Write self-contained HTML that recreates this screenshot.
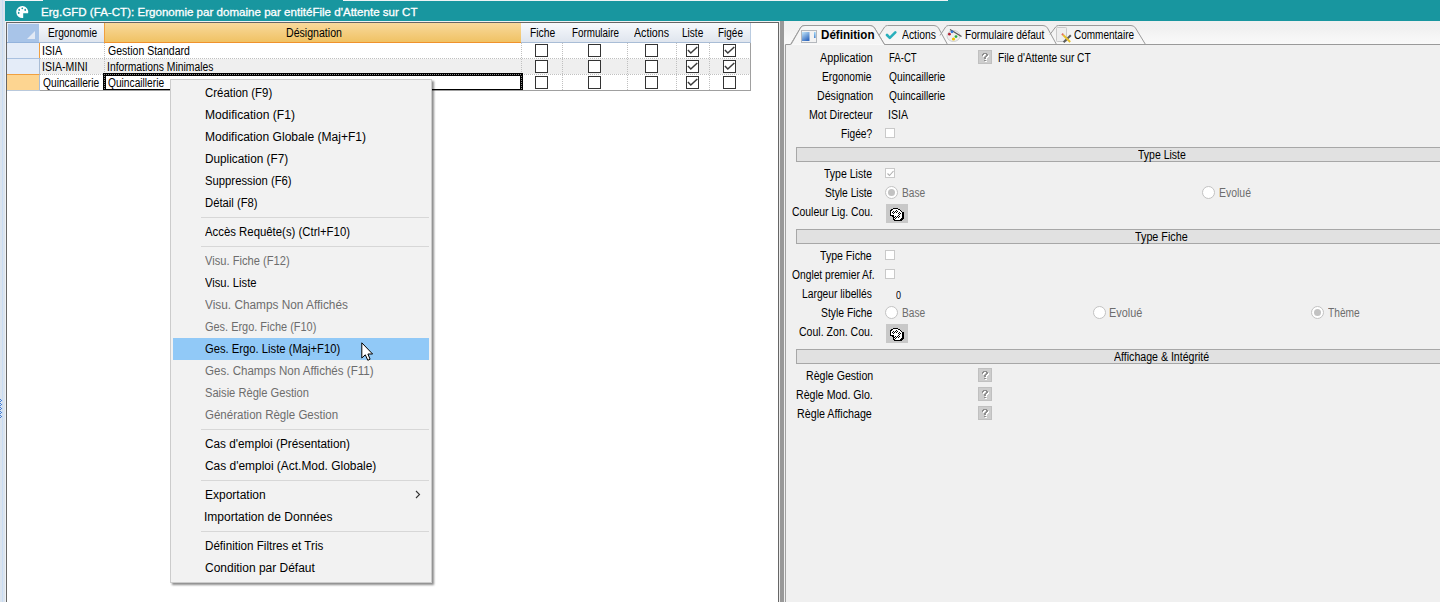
<!DOCTYPE html>
<html><head><meta charset="utf-8">
<style>
*{margin:0;padding:0;box-sizing:border-box}
html,body{width:1440px;height:602px;overflow:hidden;background:#fff;font-family:"Liberation Sans",sans-serif;font-size:11px;color:#000;letter-spacing:-0.3px}
.a{position:absolute}
.t{position:absolute;white-space:nowrap;line-height:13px}
.hd{position:absolute;top:23px;height:20px;background:linear-gradient(#f7f9fc,#dfe5ee);border-bottom:1px solid #a9bdd6;border-right:1px solid #b9cbe0;text-align:center;line-height:18px}
.cb{position:absolute;width:13px;height:13px;border:1px solid #333;background:#fff}
.vd{position:absolute;width:1px;border-left:1px dotted #c0c0c0}
.hdot{position:absolute;height:1px;border-top:1px dotted #c0c0c0}
.mi{position:absolute;left:205px;letter-spacing:0;white-space:nowrap;font-size:12px;line-height:22px;height:22px}
.dis{color:#6d6d6d}
.sep{position:absolute;left:201px;width:228px;height:1px;background:#d7d7d7}
.lab{position:absolute;right:568px;white-space:nowrap;line-height:13px;text-align:right}
.val{position:absolute;left:888px;white-space:nowrap;line-height:13px}
.fcb{position:absolute;left:885px;width:10px;height:10px;border:1px solid #c9c9c9;background:#fff}
.band{position:absolute;left:796px;width:700px;height:15px;background:#e1e1e1;border:1px solid #a7a7a7;border-right:none}
.bandt{position:absolute;left:796px;width:732px;text-align:center;line-height:13px;margin-top:-1px;letter-spacing:-0.2px}
.rad{position:absolute;width:13px;height:13px;border:1px solid #c2c2c2;border-radius:50%;background:#fff}
.rad.on::after{content:"";position:absolute;left:2px;top:2px;width:7px;height:7px;border-radius:50%;background:#c2c2c2}
.qb{position:absolute;left:978px;width:14px;height:14px;background:#c9c9c9;color:#f4f4f4;font-weight:bold;font-size:11px;text-align:center;line-height:14px}
.pb{position:absolute;left:886px;width:22px;height:19px;background:#c8c8c8}
</style></head><body>

<!-- left strip -->
<div class="a" style="left:0;top:0;width:6px;height:602px;background:#dbe4ee"></div>
<div class="a" style="left:2px;top:0;width:1px;height:602px;background:#c9dcf3"></div>
<div class="a" style="left:5px;top:0;width:1px;height:602px;background:#eef2f6"></div>

<!-- title bar -->
<div class="a" style="left:5px;top:0;width:1435px;height:21px;background:#18969f"></div>
<div class="a" style="left:5px;top:0;width:38px;height:1px;background:#f4f6f8"></div>
<div class="a" style="left:5px;top:21px;width:1435px;height:1px;background:#f2f2f2"></div>
<div class="a" style="left:343px;top:0;width:605px;height:1px;background:#eef3f5"></div>
<svg class="a" style="left:0;top:399px" width="3" height="19" shape-rendering="crispEdges" fill="#3f7bd8"><rect x="0" y="0" width="1" height="1"/><rect x="1" y="1" width="1" height="1"/><rect x="0" y="2" width="1" height="1"/><rect x="0" y="4" width="1" height="1"/><rect x="1" y="5" width="1" height="1"/><rect x="0" y="6" width="1" height="1"/><rect x="0" y="8" width="1" height="1"/><rect x="1" y="9" width="1" height="1"/><rect x="0" y="10" width="1" height="1"/><rect x="0" y="12" width="1" height="1"/><rect x="1" y="13" width="1" height="1"/><rect x="0" y="14" width="1" height="1"/><rect x="0" y="16" width="1" height="1"/><rect x="1" y="17" width="1" height="1"/><rect x="0" y="18" width="1" height="1"/></svg>

<svg class="a" style="left:12px;top:3px" width="20" height="18" viewBox="0 0 20 18"><path fill="#fff" d="M11.2 10.3H16.12A6 6 0 1 0 11.2 14.97Z"/><ellipse cx="7.2" cy="6.9" rx="0.85" ry="1.05" fill="#18969f"/><ellipse cx="10.3" cy="5.4" rx="0.9" ry="0.8" fill="#18969f"/><ellipse cx="13.2" cy="6.9" rx="0.85" ry="1.05" fill="#18969f"/><ellipse cx="6.7" cy="9.9" rx="0.8" ry="1.05" fill="#18969f"/></svg>


<!-- left pane -->
<div class="a" style="left:6px;top:22px;width:773px;height:600px;border:1px solid #666;border-bottom:none"></div>
<div class="a" style="left:779px;top:21px;width:1px;height:581px;background:#ececec"></div>
<div class="a" style="left:780px;top:21px;width:4px;height:581px;background:#999"></div>
<div class="a" style="left:784px;top:21px;width:656px;height:581px;background:#f0f0f0"></div>

<!-- grid header -->
<div class="a" style="left:7px;top:23px;width:33px;height:20px;background:#a8c4e8;border-bottom:1px solid #93b3dc;border-right:1px solid #9bb6d8"></div>
<div class="a" style="left:27px;top:31px;width:0;height:0;border-left:8px solid transparent;border-bottom:8px solid #e3eaf5"></div><div class="a" style="left:7px;top:23px;width:32px;height:1px;background:#e4ecf8"></div><div class="a" style="left:7px;top:23px;width:1px;height:19px;background:#e4ecf8"></div>
<div class="hd" style="left:39px;width:66px"></div>
<div class="hd" style="left:104px;width:418px;background:linear-gradient(#f8d99c,#f0c264);border-left:1px solid #f0a040;border-bottom:1px solid #f0922c;border-right:1px solid #b9cbe0"></div>
<div class="hd" style="left:521px;width:42px"></div>
<div class="hd" style="left:562px;width:66px"></div>
<div class="hd" style="left:627px;width:50px"></div>
<div class="hd" style="left:676px;width:34px"></div>
<div class="hd" style="left:709px;width:42px"></div>

<!-- rows -->
<div class="a" style="left:7px;top:43px;width:33px;height:16px;background:#e4ecf8;border-bottom:1px solid #a9c1e0;border-right:1px solid #a9bdd6"></div>
<div class="a" style="left:7px;top:59px;width:33px;height:16px;background:#e4ecf8;border-bottom:1px solid #f0a040;border-right:1px solid #a9bdd6"></div>
<div class="a" style="left:7px;top:75px;width:33px;height:16px;background:#fdd591;border-bottom:1px solid #b9c9dc;border-right:1px solid #a9bdd6"></div>
<div class="a" style="left:39px;top:43px;width:1px;height:15px;background:#f0a040"></div>
<div class="a" style="left:40px;top:59px;width:711px;height:15px;background:#efefef"></div>
<div class="hdot" style="left:40px;top:58px;width:711px"></div>
<div class="hdot" style="left:40px;top:74px;width:711px"></div>
<div class="a" style="left:40px;top:90px;width:711px;height:1px;background:#a0a0a0"></div>
<div class="vd" style="left:104px;top:43px;height:47px"></div>
<div class="vd" style="left:521px;top:43px;height:47px"></div>
<div class="vd" style="left:562px;top:43px;height:47px"></div>
<div class="vd" style="left:627px;top:43px;height:47px"></div>
<div class="vd" style="left:676px;top:43px;height:47px"></div>
<div class="vd" style="left:709px;top:43px;height:47px"></div>
<div class="a" style="left:750px;top:43px;width:1px;height:48px;background:#a0a0a0"></div>






<div class="a" style="left:103px;top:73px;width:420px;height:17px;border:3px solid #000;border-bottom-width:1px"></div>
<div class="a" style="left:104px;top:74px;width:418px;height:1px;background:repeating-linear-gradient(90deg,#8a8a8a 0 1px,#000 1px 2px)"></div><div class="a" style="left:104px;top:75px;width:1px;height:14px;background:repeating-linear-gradient(180deg,#000 0 1px,#8a8a8a 1px 2px)"></div><div class="a" style="left:521px;top:75px;width:1px;height:14px;background:repeating-linear-gradient(180deg,#000 0 1px,#8a8a8a 1px 2px)"></div>

<div class="cb" style="left:535px;top:44px"></div>
<div class="cb" style="left:535px;top:60px"></div>
<div class="cb" style="left:535px;top:76px"></div>
<div class="cb" style="left:588px;top:44px"></div>
<div class="cb" style="left:588px;top:60px"></div>
<div class="cb" style="left:588px;top:76px"></div>
<div class="cb" style="left:645px;top:44px"></div>
<div class="cb" style="left:645px;top:60px"></div>
<div class="cb" style="left:645px;top:76px"></div>
<div class="cb" style="left:686px;top:44px"><svg width="11" height="11" style="position:absolute;left:0;top:0"><path d="M0.9 5L3.8 8L10.3 2" fill="none" stroke="#3a3a3a" stroke-width="1.5"/></svg></div>
<div class="cb" style="left:686px;top:60px"><svg width="11" height="11" style="position:absolute;left:0;top:0"><path d="M0.9 5L3.8 8L10.3 2" fill="none" stroke="#3a3a3a" stroke-width="1.5"/></svg></div>
<div class="cb" style="left:686px;top:76px"><svg width="11" height="11" style="position:absolute;left:0;top:0"><path d="M0.9 5L3.8 8L10.3 2" fill="none" stroke="#3a3a3a" stroke-width="1.5"/></svg></div>
<div class="cb" style="left:723px;top:44px"><svg width="11" height="11" style="position:absolute;left:0;top:0"><path d="M0.9 5L3.8 8L10.3 2" fill="none" stroke="#3a3a3a" stroke-width="1.5"/></svg></div>
<div class="cb" style="left:723px;top:60px"><svg width="11" height="11" style="position:absolute;left:0;top:0"><path d="M0.9 5L3.8 8L10.3 2" fill="none" stroke="#3a3a3a" stroke-width="1.5"/></svg></div>
<div class="cb" style="left:723px;top:76px"></div>

<!-- right panel -->
<div class="a" style="left:785px;top:44px;width:655px;height:558px;border-left:1px solid #a0a0a0;background:#f0f0f0"></div>
<!-- tabs -->
<div class="a" style="left:784px;top:22px;width:656px;height:23px;background:linear-gradient(#f0f0f0 0%,#f1f1f1 30%,#fafafa 100%)"></div>
<svg class="a" style="left:784px;top:22px" width="656" height="24" viewBox="784 22 656 24">
<path d="M785.5 45.5V44.5H790.5L801 27Q802.5 25.5 805 25.5H870Q873 25.5 874.5 28L884.5 44.5H1440" fill="none" stroke="#9a9a9a" stroke-width="1"/>
<path d="M791 44L801 27Q802.5 25.5 805 25.5H870Q873 25.5 874.5 28L884 44Z" fill="#f6f6f6"/>
<path d="M791 44.5L801 27Q802.5 25.5 805 25.5H870Q873 25.5 874.5 28L884.5 44.5" fill="none" stroke="#9a9a9a"/>
<path d="M879 35.5L884.6 27Q885.6 25.5 887.5 25.5H934Q937 25.5 938.5 28L947.5 44.5" fill="none" stroke="#9a9a9a"/>
<path d="M940 35.5L945.6 27Q946.6 25.5 948.5 25.5H1043Q1046 25.5 1047.5 28L1056.5 44.5" fill="none" stroke="#9a9a9a"/>
<path d="M1050 34.5L1055.6 27Q1056.6 25.5 1058.5 25.5H1131Q1134 25.5 1135.5 28L1145.5 44.5" fill="none" stroke="#9a9a9a"/>
</svg>

<svg class="a" style="left:801px;top:30px" width="16" height="13" viewBox="0 0 16 13"><defs><linearGradient id="gb" x1="0" y1="0" x2="0.6" y2="1"><stop offset="0" stop-color="#c4e8fb"/><stop offset="1" stop-color="#356cc0"/></linearGradient><linearGradient id="gb2" x1="0" y1="0" x2="0" y2="1"><stop offset="0" stop-color="#9dd4f6"/><stop offset="1" stop-color="#4a86d0"/></linearGradient></defs>
<rect x="0.5" y="0.5" width="15" height="12" fill="#f2f2f2" stroke="#b4b8bd"/><rect x="1" y="2" width="7.5" height="9" fill="url(#gb)"/><rect x="13" y="2" width="1.6" height="6" fill="url(#gb2)"/></svg>
<svg class="a" style="left:885px;top:30px" width="12" height="10" viewBox="0 0 12 10"><path d="M2 5L4.8 7.8L10.3 2.3" fill="none" stroke="#29afbc" stroke-width="2.6" stroke-linecap="round" stroke-linejoin="round"/></svg>
<svg class="a" style="left:946px;top:28px" width="17" height="15" viewBox="0 0 17 15"><ellipse cx="7.5" cy="8" rx="6.5" ry="5.5" fill="#efefef" stroke="#c8c8c8" stroke-width="0.8"/><path d="M4 1.5L15.5 8.5" stroke="#555" stroke-width="1.2"/><circle cx="6" cy="3.8" r="1.4" fill="#3578d8"/><circle cx="3.4" cy="6.2" r="1.4" fill="#b22030"/><circle cx="10" cy="8.6" r="1.4" fill="#28b040"/><circle cx="7.5" cy="11" r="1.6" fill="#f0c000"/></svg>
<svg class="a" style="left:1055px;top:26px" width="17" height="17" viewBox="0 0 17 17"><rect x="1.5" y="1.5" width="10" height="14" rx="0.8" fill="#eeeeee" stroke="#c9c9c9"/><path d="M15.8 9.2L8.6 16.2" stroke="#5a5a5a" stroke-width="2"/><path d="M8.2 9L15.2 16" stroke="#e6bf2e" stroke-width="2"/><path d="M7 7.8L8.2 9" stroke="#e07060" stroke-width="2"/></svg>

























<div class="qb" style="top:50px"><svg style="position:absolute;left:0;top:0" width="14" height="14" shape-rendering="crispEdges"><rect x="0.5" y="0.5" width="13" height="13" fill="#cdcdcd" stroke="#c0c0c0"/><rect x="6" y="4" width="1" height="1" fill="#fff"/><rect x="7" y="4" width="1" height="1" fill="#fff"/><rect x="8" y="4" width="1" height="1" fill="#fff"/><rect x="9" y="4" width="1" height="1" fill="#fff"/><rect x="5" y="5" width="1" height="1" fill="#fff"/><rect x="6" y="5" width="1" height="1" fill="#fff"/><rect x="9" y="5" width="1" height="1" fill="#fff"/><rect x="10" y="5" width="1" height="1" fill="#fff"/><rect x="5" y="6" width="1" height="1" fill="#fff"/><rect x="9" y="6" width="1" height="1" fill="#fff"/><rect x="10" y="6" width="1" height="1" fill="#fff"/><rect x="8" y="7" width="1" height="1" fill="#fff"/><rect x="9" y="7" width="1" height="1" fill="#fff"/><rect x="7" y="8" width="1" height="1" fill="#fff"/><rect x="8" y="8" width="1" height="1" fill="#fff"/><rect x="7" y="9" width="1" height="1" fill="#fff"/><rect x="8" y="9" width="1" height="1" fill="#fff"/><rect x="7" y="11" width="1" height="1" fill="#fff"/><rect x="8" y="11" width="1" height="1" fill="#fff"/><rect x="5" y="3" width="1" height="1" fill="#8e8e8e"/><rect x="6" y="3" width="1" height="1" fill="#8e8e8e"/><rect x="7" y="3" width="1" height="1" fill="#8e8e8e"/><rect x="8" y="3" width="1" height="1" fill="#8e8e8e"/><rect x="4" y="4" width="1" height="1" fill="#8e8e8e"/><rect x="5" y="4" width="1" height="1" fill="#8e8e8e"/><rect x="8" y="4" width="1" height="1" fill="#8e8e8e"/><rect x="9" y="4" width="1" height="1" fill="#8e8e8e"/><rect x="4" y="5" width="1" height="1" fill="#8e8e8e"/><rect x="8" y="5" width="1" height="1" fill="#8e8e8e"/><rect x="9" y="5" width="1" height="1" fill="#8e8e8e"/><rect x="7" y="6" width="1" height="1" fill="#8e8e8e"/><rect x="8" y="6" width="1" height="1" fill="#8e8e8e"/><rect x="6" y="7" width="1" height="1" fill="#8e8e8e"/><rect x="7" y="7" width="1" height="1" fill="#8e8e8e"/><rect x="6" y="8" width="1" height="1" fill="#8e8e8e"/><rect x="7" y="8" width="1" height="1" fill="#8e8e8e"/><rect x="6" y="10" width="1" height="1" fill="#8e8e8e"/><rect x="7" y="10" width="1" height="1" fill="#8e8e8e"/></svg></div>

<div class="fcb" style="top:128px"></div>
<div class="band" style="top:147px"></div>
<div class="fcb" style="top:168px"><svg width="9" height="9" style="position:absolute;left:0;top:0"><path d="M1.5 4.5L3.5 6.5L7.5 2" fill="none" stroke="#b0b0b0" stroke-width="1.1"/></svg></div>
<div class="rad on" style="left:885px;top:186px"></div>
<div class="rad" style="left:1202px;top:186px"></div>
<div class="pb" style="top:204px"><svg style="position:absolute;left:0;top:0" width="22" height="19" shape-rendering="crispEdges"><rect x="7" y="4" width="5" height="1" fill="#000"/><rect x="5" y="5" width="2" height="1" fill="#000"/><rect x="7" y="5" width="5" height="1" fill="#fff"/><rect x="12" y="5" width="2" height="1" fill="#000"/><rect x="4" y="6" width="2" height="1" fill="#000"/><rect x="6" y="6" width="8" height="1" fill="#fff"/><rect x="14" y="6" width="1" height="1" fill="#000"/><rect x="4" y="7" width="1" height="1" fill="#000"/><rect x="5" y="7" width="10" height="1" fill="#fff"/><rect x="15" y="7" width="1" height="1" fill="#000"/><rect x="4" y="8" width="1" height="1" fill="#000"/><rect x="5" y="8" width="11" height="1" fill="#fff"/><rect x="16" y="8" width="2" height="1" fill="#000"/><rect x="4" y="9" width="1" height="1" fill="#000"/><rect x="5" y="9" width="11" height="1" fill="#fff"/><rect x="16" y="9" width="2" height="1" fill="#000"/><rect x="4" y="10" width="1" height="1" fill="#000"/><rect x="5" y="10" width="11" height="1" fill="#fff"/><rect x="16" y="10" width="2" height="1" fill="#000"/><rect x="4" y="11" width="4" height="1" fill="#000"/><rect x="8" y="11" width="8" height="1" fill="#fff"/><rect x="16" y="11" width="2" height="1" fill="#000"/><rect x="6" y="12" width="2" height="1" fill="#000"/><rect x="8" y="12" width="8" height="1" fill="#fff"/><rect x="16" y="12" width="2" height="1" fill="#000"/><rect x="7" y="13" width="1" height="1" fill="#000"/><rect x="8" y="13" width="8" height="1" fill="#fff"/><rect x="16" y="13" width="2" height="1" fill="#000"/><rect x="7" y="14" width="1" height="1" fill="#000"/><rect x="8" y="14" width="7" height="1" fill="#fff"/><rect x="15" y="14" width="3" height="1" fill="#000"/><rect x="7" y="15" width="2" height="1" fill="#000"/><rect x="9" y="15" width="5" height="1" fill="#fff"/><rect x="14" y="15" width="3" height="1" fill="#000"/><rect x="8" y="16" width="8" height="1" fill="#000"/><rect x="7" y="7" width="1" height="1" fill="#000"/><rect x="6" y="8" width="1" height="1" fill="#000"/><rect x="8" y="8" width="1" height="1" fill="#000"/><rect x="7" y="9" width="1" height="1" fill="#000"/><rect x="10" y="6" width="1" height="1" fill="#000"/><rect x="9" y="7" width="1" height="1" fill="#000"/><rect x="11" y="7" width="1" height="1" fill="#000"/><rect x="10" y="8" width="1" height="1" fill="#000"/><rect x="13" y="8" width="1" height="1" fill="#000"/><rect x="12" y="9" width="1" height="1" fill="#000"/><rect x="14" y="9" width="1" height="1" fill="#000"/><rect x="13" y="10" width="1" height="1" fill="#000"/><rect x="12" y="11" width="1" height="1" fill="#000"/><rect x="11" y="12" width="1" height="1" fill="#000"/><rect x="13" y="12" width="1" height="1" fill="#000"/><rect x="12" y="13" width="1" height="1" fill="#000"/><rect x="9" y="12" width="1" height="1" fill="#000"/><rect x="8" y="13" width="1" height="1" fill="#000"/><rect x="10" y="13" width="1" height="1" fill="#000"/><rect x="9" y="14" width="1" height="1" fill="#000"/></svg></div>
<div class="band" style="top:229px"></div>
<div class="fcb" style="top:250px"></div>
<div class="fcb" style="top:269px"></div>

<div class="rad" style="left:885px;top:306px"></div>
<div class="rad" style="left:1093px;top:306px"></div>
<div class="rad on" style="left:1311px;top:306px"></div>
<div class="pb" style="top:324px"><svg style="position:absolute;left:0;top:0" width="22" height="19" shape-rendering="crispEdges"><rect x="7" y="4" width="5" height="1" fill="#000"/><rect x="5" y="5" width="2" height="1" fill="#000"/><rect x="7" y="5" width="5" height="1" fill="#fff"/><rect x="12" y="5" width="2" height="1" fill="#000"/><rect x="4" y="6" width="2" height="1" fill="#000"/><rect x="6" y="6" width="8" height="1" fill="#fff"/><rect x="14" y="6" width="1" height="1" fill="#000"/><rect x="4" y="7" width="1" height="1" fill="#000"/><rect x="5" y="7" width="10" height="1" fill="#fff"/><rect x="15" y="7" width="1" height="1" fill="#000"/><rect x="4" y="8" width="1" height="1" fill="#000"/><rect x="5" y="8" width="11" height="1" fill="#fff"/><rect x="16" y="8" width="2" height="1" fill="#000"/><rect x="4" y="9" width="1" height="1" fill="#000"/><rect x="5" y="9" width="11" height="1" fill="#fff"/><rect x="16" y="9" width="2" height="1" fill="#000"/><rect x="4" y="10" width="1" height="1" fill="#000"/><rect x="5" y="10" width="11" height="1" fill="#fff"/><rect x="16" y="10" width="2" height="1" fill="#000"/><rect x="4" y="11" width="4" height="1" fill="#000"/><rect x="8" y="11" width="8" height="1" fill="#fff"/><rect x="16" y="11" width="2" height="1" fill="#000"/><rect x="6" y="12" width="2" height="1" fill="#000"/><rect x="8" y="12" width="8" height="1" fill="#fff"/><rect x="16" y="12" width="2" height="1" fill="#000"/><rect x="7" y="13" width="1" height="1" fill="#000"/><rect x="8" y="13" width="8" height="1" fill="#fff"/><rect x="16" y="13" width="2" height="1" fill="#000"/><rect x="7" y="14" width="1" height="1" fill="#000"/><rect x="8" y="14" width="7" height="1" fill="#fff"/><rect x="15" y="14" width="3" height="1" fill="#000"/><rect x="7" y="15" width="2" height="1" fill="#000"/><rect x="9" y="15" width="5" height="1" fill="#fff"/><rect x="14" y="15" width="3" height="1" fill="#000"/><rect x="8" y="16" width="8" height="1" fill="#000"/><rect x="7" y="7" width="1" height="1" fill="#000"/><rect x="6" y="8" width="1" height="1" fill="#000"/><rect x="8" y="8" width="1" height="1" fill="#000"/><rect x="7" y="9" width="1" height="1" fill="#000"/><rect x="10" y="6" width="1" height="1" fill="#000"/><rect x="9" y="7" width="1" height="1" fill="#000"/><rect x="11" y="7" width="1" height="1" fill="#000"/><rect x="10" y="8" width="1" height="1" fill="#000"/><rect x="13" y="8" width="1" height="1" fill="#000"/><rect x="12" y="9" width="1" height="1" fill="#000"/><rect x="14" y="9" width="1" height="1" fill="#000"/><rect x="13" y="10" width="1" height="1" fill="#000"/><rect x="12" y="11" width="1" height="1" fill="#000"/><rect x="11" y="12" width="1" height="1" fill="#000"/><rect x="13" y="12" width="1" height="1" fill="#000"/><rect x="12" y="13" width="1" height="1" fill="#000"/><rect x="9" y="12" width="1" height="1" fill="#000"/><rect x="8" y="13" width="1" height="1" fill="#000"/><rect x="10" y="13" width="1" height="1" fill="#000"/><rect x="9" y="14" width="1" height="1" fill="#000"/></svg></div>
<div class="band" style="top:349px"></div>
<div class="qb" style="top:368px"><svg style="position:absolute;left:0;top:0" width="14" height="14" shape-rendering="crispEdges"><rect x="0.5" y="0.5" width="13" height="13" fill="#cdcdcd" stroke="#c0c0c0"/><rect x="6" y="4" width="1" height="1" fill="#fff"/><rect x="7" y="4" width="1" height="1" fill="#fff"/><rect x="8" y="4" width="1" height="1" fill="#fff"/><rect x="9" y="4" width="1" height="1" fill="#fff"/><rect x="5" y="5" width="1" height="1" fill="#fff"/><rect x="6" y="5" width="1" height="1" fill="#fff"/><rect x="9" y="5" width="1" height="1" fill="#fff"/><rect x="10" y="5" width="1" height="1" fill="#fff"/><rect x="5" y="6" width="1" height="1" fill="#fff"/><rect x="9" y="6" width="1" height="1" fill="#fff"/><rect x="10" y="6" width="1" height="1" fill="#fff"/><rect x="8" y="7" width="1" height="1" fill="#fff"/><rect x="9" y="7" width="1" height="1" fill="#fff"/><rect x="7" y="8" width="1" height="1" fill="#fff"/><rect x="8" y="8" width="1" height="1" fill="#fff"/><rect x="7" y="9" width="1" height="1" fill="#fff"/><rect x="8" y="9" width="1" height="1" fill="#fff"/><rect x="7" y="11" width="1" height="1" fill="#fff"/><rect x="8" y="11" width="1" height="1" fill="#fff"/><rect x="5" y="3" width="1" height="1" fill="#8e8e8e"/><rect x="6" y="3" width="1" height="1" fill="#8e8e8e"/><rect x="7" y="3" width="1" height="1" fill="#8e8e8e"/><rect x="8" y="3" width="1" height="1" fill="#8e8e8e"/><rect x="4" y="4" width="1" height="1" fill="#8e8e8e"/><rect x="5" y="4" width="1" height="1" fill="#8e8e8e"/><rect x="8" y="4" width="1" height="1" fill="#8e8e8e"/><rect x="9" y="4" width="1" height="1" fill="#8e8e8e"/><rect x="4" y="5" width="1" height="1" fill="#8e8e8e"/><rect x="8" y="5" width="1" height="1" fill="#8e8e8e"/><rect x="9" y="5" width="1" height="1" fill="#8e8e8e"/><rect x="7" y="6" width="1" height="1" fill="#8e8e8e"/><rect x="8" y="6" width="1" height="1" fill="#8e8e8e"/><rect x="6" y="7" width="1" height="1" fill="#8e8e8e"/><rect x="7" y="7" width="1" height="1" fill="#8e8e8e"/><rect x="6" y="8" width="1" height="1" fill="#8e8e8e"/><rect x="7" y="8" width="1" height="1" fill="#8e8e8e"/><rect x="6" y="10" width="1" height="1" fill="#8e8e8e"/><rect x="7" y="10" width="1" height="1" fill="#8e8e8e"/></svg></div><div class="qb" style="top:387px"><svg style="position:absolute;left:0;top:0" width="14" height="14" shape-rendering="crispEdges"><rect x="0.5" y="0.5" width="13" height="13" fill="#cdcdcd" stroke="#c0c0c0"/><rect x="6" y="4" width="1" height="1" fill="#fff"/><rect x="7" y="4" width="1" height="1" fill="#fff"/><rect x="8" y="4" width="1" height="1" fill="#fff"/><rect x="9" y="4" width="1" height="1" fill="#fff"/><rect x="5" y="5" width="1" height="1" fill="#fff"/><rect x="6" y="5" width="1" height="1" fill="#fff"/><rect x="9" y="5" width="1" height="1" fill="#fff"/><rect x="10" y="5" width="1" height="1" fill="#fff"/><rect x="5" y="6" width="1" height="1" fill="#fff"/><rect x="9" y="6" width="1" height="1" fill="#fff"/><rect x="10" y="6" width="1" height="1" fill="#fff"/><rect x="8" y="7" width="1" height="1" fill="#fff"/><rect x="9" y="7" width="1" height="1" fill="#fff"/><rect x="7" y="8" width="1" height="1" fill="#fff"/><rect x="8" y="8" width="1" height="1" fill="#fff"/><rect x="7" y="9" width="1" height="1" fill="#fff"/><rect x="8" y="9" width="1" height="1" fill="#fff"/><rect x="7" y="11" width="1" height="1" fill="#fff"/><rect x="8" y="11" width="1" height="1" fill="#fff"/><rect x="5" y="3" width="1" height="1" fill="#8e8e8e"/><rect x="6" y="3" width="1" height="1" fill="#8e8e8e"/><rect x="7" y="3" width="1" height="1" fill="#8e8e8e"/><rect x="8" y="3" width="1" height="1" fill="#8e8e8e"/><rect x="4" y="4" width="1" height="1" fill="#8e8e8e"/><rect x="5" y="4" width="1" height="1" fill="#8e8e8e"/><rect x="8" y="4" width="1" height="1" fill="#8e8e8e"/><rect x="9" y="4" width="1" height="1" fill="#8e8e8e"/><rect x="4" y="5" width="1" height="1" fill="#8e8e8e"/><rect x="8" y="5" width="1" height="1" fill="#8e8e8e"/><rect x="9" y="5" width="1" height="1" fill="#8e8e8e"/><rect x="7" y="6" width="1" height="1" fill="#8e8e8e"/><rect x="8" y="6" width="1" height="1" fill="#8e8e8e"/><rect x="6" y="7" width="1" height="1" fill="#8e8e8e"/><rect x="7" y="7" width="1" height="1" fill="#8e8e8e"/><rect x="6" y="8" width="1" height="1" fill="#8e8e8e"/><rect x="7" y="8" width="1" height="1" fill="#8e8e8e"/><rect x="6" y="10" width="1" height="1" fill="#8e8e8e"/><rect x="7" y="10" width="1" height="1" fill="#8e8e8e"/></svg></div><div class="qb" style="top:406px"><svg style="position:absolute;left:0;top:0" width="14" height="14" shape-rendering="crispEdges"><rect x="0.5" y="0.5" width="13" height="13" fill="#cdcdcd" stroke="#c0c0c0"/><rect x="6" y="4" width="1" height="1" fill="#fff"/><rect x="7" y="4" width="1" height="1" fill="#fff"/><rect x="8" y="4" width="1" height="1" fill="#fff"/><rect x="9" y="4" width="1" height="1" fill="#fff"/><rect x="5" y="5" width="1" height="1" fill="#fff"/><rect x="6" y="5" width="1" height="1" fill="#fff"/><rect x="9" y="5" width="1" height="1" fill="#fff"/><rect x="10" y="5" width="1" height="1" fill="#fff"/><rect x="5" y="6" width="1" height="1" fill="#fff"/><rect x="9" y="6" width="1" height="1" fill="#fff"/><rect x="10" y="6" width="1" height="1" fill="#fff"/><rect x="8" y="7" width="1" height="1" fill="#fff"/><rect x="9" y="7" width="1" height="1" fill="#fff"/><rect x="7" y="8" width="1" height="1" fill="#fff"/><rect x="8" y="8" width="1" height="1" fill="#fff"/><rect x="7" y="9" width="1" height="1" fill="#fff"/><rect x="8" y="9" width="1" height="1" fill="#fff"/><rect x="7" y="11" width="1" height="1" fill="#fff"/><rect x="8" y="11" width="1" height="1" fill="#fff"/><rect x="5" y="3" width="1" height="1" fill="#8e8e8e"/><rect x="6" y="3" width="1" height="1" fill="#8e8e8e"/><rect x="7" y="3" width="1" height="1" fill="#8e8e8e"/><rect x="8" y="3" width="1" height="1" fill="#8e8e8e"/><rect x="4" y="4" width="1" height="1" fill="#8e8e8e"/><rect x="5" y="4" width="1" height="1" fill="#8e8e8e"/><rect x="8" y="4" width="1" height="1" fill="#8e8e8e"/><rect x="9" y="4" width="1" height="1" fill="#8e8e8e"/><rect x="4" y="5" width="1" height="1" fill="#8e8e8e"/><rect x="8" y="5" width="1" height="1" fill="#8e8e8e"/><rect x="9" y="5" width="1" height="1" fill="#8e8e8e"/><rect x="7" y="6" width="1" height="1" fill="#8e8e8e"/><rect x="8" y="6" width="1" height="1" fill="#8e8e8e"/><rect x="6" y="7" width="1" height="1" fill="#8e8e8e"/><rect x="7" y="7" width="1" height="1" fill="#8e8e8e"/><rect x="6" y="8" width="1" height="1" fill="#8e8e8e"/><rect x="7" y="8" width="1" height="1" fill="#8e8e8e"/><rect x="6" y="10" width="1" height="1" fill="#8e8e8e"/><rect x="7" y="10" width="1" height="1" fill="#8e8e8e"/></svg></div>

<!-- texts -->
<div class="t" style="left:40.50px;top:5px;letter-spacing:0;transform:scaleX(1.0063);transform-origin:0 0;font-size:11.5px;color:#fff;line-height:15px;-webkit-text-stroke:0.3px #fff">Erg.GFD (FA-CT): Ergonomie par domaine par entitéFile d'Attente sur CT</div>
<div class="t" style="left:47.60px;top:27px;letter-spacing:0;transform:scaleX(0.8482);transform-origin:0 0;font-size:12px">Ergonomie</div>
<div class="t" style="left:285.90px;top:27px;letter-spacing:0;transform:scaleX(0.8828);transform-origin:0 0;font-size:12px">Désignation</div>
<div class="t" style="left:529.70px;top:27px;letter-spacing:0;transform:scaleX(0.8595);transform-origin:0 0;font-size:12px">Fiche</div>
<div class="t" style="left:571.80px;top:27px;letter-spacing:0;transform:scaleX(0.8184);transform-origin:0 0;font-size:12px">Formulaire</div>
<div class="t" style="left:634.00px;top:27px;letter-spacing:0;transform:scaleX(0.8894);transform-origin:0 0;font-size:12px">Actions</div>
<div class="t" style="left:682.40px;top:27px;letter-spacing:0;transform:scaleX(0.8374);transform-origin:0 0;font-size:12px">Liste</div>
<div class="t" style="left:717.60px;top:27px;letter-spacing:0;transform:scaleX(0.8305);transform-origin:0 0;font-size:12px">Figée</div>
<div class="t" style="left:41.61px;top:45px;letter-spacing:0;transform:scaleX(0.8906);transform-origin:0 0;font-size:12px">ISIA</div>
<div class="t" style="left:41.62px;top:61px;letter-spacing:0;transform:scaleX(0.8783);transform-origin:0 0;font-size:12px">ISIA-MINI</div>
<div class="t" style="left:42.50px;top:77px;letter-spacing:0;transform:scaleX(0.8515);transform-origin:0 0;font-size:12px">Quincaillerie</div>
<div class="t" style="left:107.60px;top:45px;letter-spacing:0;transform:scaleX(0.8768);transform-origin:0 0;font-size:12px">Gestion Standard</div>
<div class="t" style="left:106.74px;top:61px;letter-spacing:0;transform:scaleX(0.8629);transform-origin:0 0;font-size:12px">Informations Minimales</div>
<div class="t" style="left:107.80px;top:77px;letter-spacing:0;transform:scaleX(0.8500);transform-origin:0 0;font-size:12px">Quincaillerie</div>
<div class="t" style="left:820.60px;top:29px;letter-spacing:0;transform:scaleX(0.9665);transform-origin:0 0;font-size:12px;font-weight:bold">Définition</div>
<div class="t" style="left:902.00px;top:29px;letter-spacing:0;transform:scaleX(0.8640);transform-origin:0 0;font-size:12px">Actions</div>
<div class="t" style="left:965.20px;top:29px;letter-spacing:0;transform:scaleX(0.8426);transform-origin:0 0;font-size:12px">Formulaire défaut</div>
<div class="t" style="left:1073.70px;top:29px;letter-spacing:0;transform:scaleX(0.8335);transform-origin:0 0;font-size:12px">Commentaire</div>
<div class="t" style="left:820.00px;top:52px;letter-spacing:0;transform:scaleX(0.8995);transform-origin:0 0;font-size:12px">Application</div>
<div class="t" style="left:822.40px;top:71px;letter-spacing:0;transform:scaleX(0.8534);transform-origin:0 0;font-size:12px">Ergonomie</div>
<div class="t" style="left:816.60px;top:90px;letter-spacing:0;transform:scaleX(0.8867);transform-origin:0 0;font-size:12px">Désignation</div>
<div class="t" style="left:808.60px;top:109px;letter-spacing:0;transform:scaleX(0.8831);transform-origin:0 0;font-size:12px">Mot Directeur</div>
<div class="t" style="left:840.70px;top:128px;letter-spacing:0;transform:scaleX(0.8509);transform-origin:0 0;font-size:12px">Figée?</div>
<div class="t" style="left:823.90px;top:168px;letter-spacing:0;transform:scaleX(0.8778);transform-origin:0 0;font-size:12px">Type Liste</div>
<div class="t" style="left:824.60px;top:187px;letter-spacing:0;transform:scaleX(0.8548);transform-origin:0 0;font-size:12px">Style Liste</div>
<div class="t" style="left:791.60px;top:206px;letter-spacing:0;transform:scaleX(0.8662);transform-origin:0 0;font-size:12px">Couleur Lig. Cou.</div>
<div class="t" style="left:820.20px;top:250px;letter-spacing:0;transform:scaleX(0.8811);transform-origin:0 0;font-size:12px">Type Fiche</div>
<div class="t" style="left:802.40px;top:288px;letter-spacing:0;transform:scaleX(0.8577);transform-origin:0 0;font-size:12px">Largeur libellés</div>
<div class="t" style="left:820.70px;top:307px;letter-spacing:0;transform:scaleX(0.8629);transform-origin:0 0;font-size:12px">Style Fiche</div>
<div class="t" style="left:798.60px;top:326px;letter-spacing:0;transform:scaleX(0.8793);transform-origin:0 0;font-size:12px">Coul. Zon. Cou.</div>
<div class="t" style="left:805.60px;top:370px;letter-spacing:0;transform:scaleX(0.8837);transform-origin:0 0;font-size:12px">Règle Gestion</div>
<div class="t" style="left:795.70px;top:389px;letter-spacing:0;transform:scaleX(0.8857);transform-origin:0 0;font-size:12px">Règle Mod. Glo.</div>
<div class="t" style="left:796.50px;top:408px;letter-spacing:0;transform:scaleX(0.8924);transform-origin:0 0;font-size:12px">Règle Affichage</div>
<div class="t" style="left:791.60px;top:269px;letter-spacing:0;transform:scaleX(0.8543);transform-origin:0 0;font-size:12px">Onglet premier Af.</div>
<div class="t" style="left:888.80px;top:52px;letter-spacing:0;transform:scaleX(0.7981);transform-origin:0 0;font-size:12px">FA-CT</div>
<div class="t" style="left:888.80px;top:71px;letter-spacing:0;transform:scaleX(0.8515);transform-origin:0 0;font-size:12px">Quincaillerie</div>
<div class="t" style="left:888.80px;top:90px;letter-spacing:0;transform:scaleX(0.8515);transform-origin:0 0;font-size:12px">Quincaillerie</div>
<div class="t" style="left:887.92px;top:109px;letter-spacing:0;transform:scaleX(0.8813);transform-origin:0 0;font-size:12px">ISIA</div>
<div class="t" style="left:998.40px;top:52px;letter-spacing:0;transform:scaleX(0.8508);transform-origin:0 0;font-size:12px">File d'Attente sur CT</div>
<div class="t" style="left:901.70px;top:187px;letter-spacing:0;transform:scaleX(0.8491);transform-origin:0 0;font-size:12px;color:#6d6d6d">Base</div>
<div class="t" style="left:1218.75px;top:187px;letter-spacing:0;transform:scaleX(0.8712);transform-origin:0 0;font-size:12px;color:#6d6d6d">Evolué</div>
<div class="t" style="left:901.50px;top:307px;letter-spacing:0;transform:scaleX(0.8491);transform-origin:0 0;font-size:12px;color:#6d6d6d">Base</div>
<div class="t" style="left:1109.00px;top:307px;letter-spacing:0;transform:scaleX(0.9050);transform-origin:0 0;font-size:12px;color:#6d6d6d">Evolué</div>
<div class="t" style="left:1328.00px;top:307px;letter-spacing:0;transform:scaleX(0.8494);transform-origin:0 0;font-size:12px;color:#6d6d6d">Thème</div>
<div class="t" style="left:1137.90px;top:149px;letter-spacing:0;transform:scaleX(0.8742);transform-origin:0 0;font-size:12px">Type Liste</div>
<div class="t" style="left:1135.40px;top:231px;letter-spacing:0;transform:scaleX(0.8980);transform-origin:0 0;font-size:12px">Type Fiche</div>
<div class="t" style="left:1113.70px;top:351px;letter-spacing:0;transform:scaleX(0.8828);transform-origin:0 0;font-size:12px">Affichage &amp; Intégrité</div>
<div class="t" style="left:896.30px;top:289px;letter-spacing:0;transform:scaleX(0.9000);transform-origin:0 0;font-size:10px">0</div>
<!-- context menu -->
<div class="a" style="left:170px;top:79px;width:262px;height:504px;background:#f2f2f2;border:1px solid #cccccc;box-shadow:2px 2px 2px rgba(0,0,0,0.45)"></div>
<div class="a" style="left:173px;top:338px;width:256px;height:22px;background:#91c9f7"></div>
<div class="mi" style="top:82px;left:205.30px;transform:scaleX(0.9506);transform-origin:0 0">Création (F9)</div>
<div class="mi" style="top:104px;left:205.30px;transform:scaleX(1.0071);transform-origin:0 0">Modification (F1)</div>
<div class="mi" style="top:126px;left:205.30px;transform:scaleX(1.0037);transform-origin:0 0">Modification Globale (Maj+F1)</div>
<div class="mi" style="top:148px;left:205.30px;transform:scaleX(0.9811);transform-origin:0 0">Duplication (F7)</div>
<div class="mi" style="top:170px;left:205.30px;transform:scaleX(0.9409);transform-origin:0 0">Suppression (F6)</div>
<div class="mi" style="top:192px;left:205.30px;transform:scaleX(0.9391);transform-origin:0 0">Détail (F8)</div>
<div class="sep" style="top:217px"></div>
<div class="mi" style="top:221px;left:205.30px;transform:scaleX(0.9474);transform-origin:0 0">Accès Requête(s) (Ctrl+F10)</div>
<div class="sep" style="top:246px"></div>
<div class="mi dis" style="top:250px;left:205.30px;transform:scaleX(0.9282);transform-origin:0 0">Visu. Fiche (F12)</div>
<div class="mi" style="top:272px;left:205.30px;transform:scaleX(0.9339);transform-origin:0 0">Visu. Liste</div>
<div class="mi dis" style="top:294px;left:205.30px;transform:scaleX(0.9861);transform-origin:0 0">Visu. Champs Non Affichés</div>
<div class="mi dis" style="top:316px;left:205.30px;transform:scaleX(0.9120);transform-origin:0 0">Ges. Ergo. Fiche (F10)</div>
<div class="mi" style="top:338px;left:205.30px;transform:scaleX(0.9363);transform-origin:0 0">Ges. Ergo. Liste (Maj+F10)</div>
<div class="mi dis" style="top:360px;left:205.30px;transform:scaleX(0.9634);transform-origin:0 0">Ges. Champs Non Affichés (F11)</div>
<div class="mi dis" style="top:382px;left:205.30px;transform:scaleX(0.9274);transform-origin:0 0">Saisie Règle Gestion</div>
<div class="mi dis" style="top:404px;left:205.30px;transform:scaleX(0.9589);transform-origin:0 0">Génération Règle Gestion</div>
<div class="sep" style="top:429px"></div>
<div class="mi" style="top:433px;left:205.30px;transform:scaleX(0.9818);transform-origin:0 0">Cas d'emploi (Présentation)</div>
<div class="mi" style="top:455px;left:205.30px;transform:scaleX(0.9938);transform-origin:0 0">Cas d'emploi (Act.Mod. Globale)</div>
<div class="sep" style="top:480px"></div>
<div class="mi" style="top:484px;left:205.30px;transform:scaleX(0.9995);transform-origin:0 0">Exportation</div>
<div class="mi" style="top:506px;left:204.30px;transform:scaleX(1.0033);transform-origin:0 0">Importation de Données</div>
<div class="sep" style="top:531px"></div>
<div class="mi" style="top:535px;left:205.30px;transform:scaleX(0.9693);transform-origin:0 0">Définition Filtres et Tris</div>
<div class="mi" style="top:557px;left:205.30px;transform:scaleX(0.9979);transform-origin:0 0">Condition par Défaut</div>
<svg class="a" style="left:415px;top:490px" width="6" height="9"><path d="M1 1L4.5 4.5L1 8" fill="none" stroke="#333" stroke-width="1.1"/></svg>
<svg class="a" style="left:361px;top:342px" width="13" height="20" viewBox="0 0 13 20"><path d="M0.8 0.8V16L4.3 12.8L6.8 18.3L9.1 17.2L6.9 12H11.6Z" fill="#fff" stroke="#000" stroke-width="1" stroke-linejoin="round"/></svg>
</body></html>
